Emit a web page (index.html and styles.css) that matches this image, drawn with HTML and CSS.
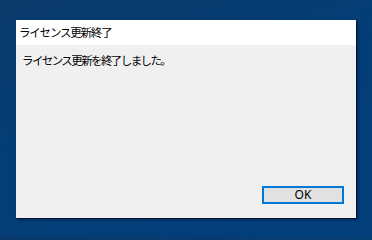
FILE: index.html
```html
<!DOCTYPE html>
<html lang="ja">
<head>
<meta charset="utf-8">
<link rel="stylesheet" href="styles.css">
</head>
<body>
<div class="desktop">
  <div class="window">
    <div class="titlebar"><span class="title">ライセンス更新終了</span></div>
    <div class="content">
      <p class="message">ライセンス更新を終了しました。</p>
      <div class="actions">
        <button class="btn">OK</button>
      </div>
    </div>
  </div>
</div>
</body>
</html>
```
FILE: styles.css
```css
html, body {
  margin: 0;
  padding: 0;
}
body {
  width: 372px;
  height: 236px;
  overflow: hidden;
  background: linear-gradient(160deg, #0b3a6a 0%, #043e78 45%, #023f7c 100%);
  font-family: "Noto Sans CJK JP", "Noto Sans", sans-serif;
}
.desktop {
  padding: 20px 0 0 16px;
}
.window {
  width: 340px;
  height: 198px;
  display: flex;
  flex-direction: column;
  background: #f0f0f0;
  box-shadow: 1px 1px 1px rgba(0, 10, 30, 0.6), 2px 2px 3px rgba(0, 10, 30, 0.35);
}
.titlebar {
  height: 25px;
  background: #ffffff;
  display: flex;
  align-items: center;
  padding-left: 3px;
}
.title {
  font-size: 11.5px;
  letter-spacing: -1.2px;
  color: #000;
  line-height: 1;
}
.content {
  flex: 1;
  display: flex;
  flex-direction: column;
  justify-content: space-between;
}
.message {
  margin: 10px 0 0 6px;
  font-size: 11.5px;
  letter-spacing: -1.6px;
  line-height: 1;
  color: #000;
}
.actions {
  display: flex;
  justify-content: flex-end;
  padding: 0 12px 14px 0;
}
.btn {
  width: 82px;
  height: 18px;
  box-sizing: border-box;
  border: 2px solid #0078d7;
  background: #e1e1e1;
  font-family: "Noto Sans", "Liberation Sans", sans-serif;
  font-size: 12px;
  line-height: 1;
  color: #000;
  padding: 0;
}
```
